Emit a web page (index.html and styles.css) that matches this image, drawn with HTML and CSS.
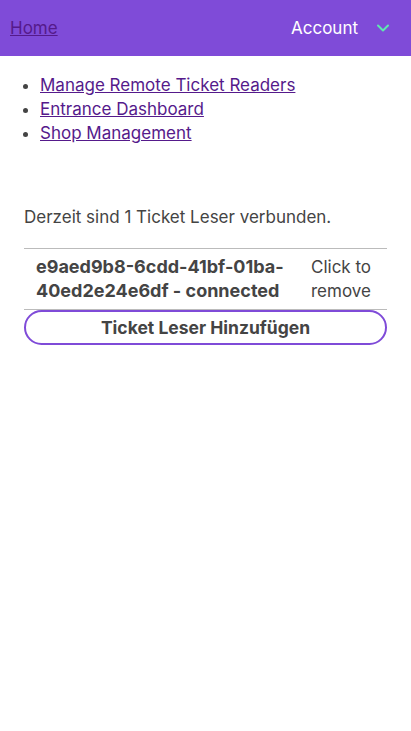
FILE: index.html
```html
<!DOCTYPE html>
<html lang="de">
<head>
<meta charset="utf-8">
<link rel="stylesheet" href="styles.css">
</head>
<body>
<header class="topbar">
  <a class="home" href="#">Home</a>
  <div class="account">
    <span>Account</span>
    <svg class="chev" width="14" height="10" viewBox="0 0 14 10"><path d="M2 2.5 L7 7.5 L12 2.5" fill="none" stroke="#5ee8b0" stroke-width="2" stroke-linecap="round" stroke-linejoin="round"/></svg>
  </div>
</header>
<ul class="nav">
  <li><a href="#">Manage Remote Ticket Readers</a></li>
  <li><a href="#">Entrance Dashboard</a></li>
  <li><a href="#">Shop Management</a></li>
</ul>
<main class="content">
  <p class="status">Derzeit sind 1 Ticket Leser verbunden.</p>
  <table class="readers">
    <tr>
      <td class="id">e9aed9b8-6cdd-41bf-01ba-40ed2e24e6df - connected</td>
      <td class="remove">Click to remove</td>
    </tr>
  </table>
  <button class="add">Ticket Leser Hinzufügen</button>
</main>
</body>
</html>
```
FILE: styles.css
```css
html, body { margin: 0; padding: 0; background: #fff; }
body { font-family: Inter, "Noto Sans", sans-serif; color: #444; }
.topbar {
  height: 56px;
  background: #7f4bd8;
  display: flex;
  align-items: center;
  justify-content: space-between;
  padding: 0 21px 0 10px;
  box-sizing: border-box;
}
.home { color: #551a8b; font-size: 17px; }
.account { display: flex; align-items: center; gap: 18px; color: #fff; font-size: 17px; }
.chev { display: block; }
.nav { margin: 17px 0 0; padding-left: 40px; font-size: 17px; line-height: 24px; color: #444; }
.nav a { color: #551a8b; }
.content { padding: 0 24px; margin-top: 60px; }
.status { margin: 0 0 19px; font-size: 17px; line-height: 24px; }
.readers { width: 100%; border-collapse: collapse; border-top: 1px solid #bbb; border-bottom: 1px solid #bbb; font-size: 17px; line-height: 24px; }
.readers td { padding: 6px 12px; vertical-align: top; }
.id { font-weight: 700; color: #444; font-size: 18px; padding-right: 4px !important; }
.remove { color: #444; width: 64px; padding-left: 14px !important; padding-right: 12px !important; }
.add {
  display: block;
  width: 100%;
  height: 35px;
  margin-top: 0;
  border: 2px solid #7f4bd8;
  border-radius: 18px;
  background: #fff;
  font-family: Inter, sans-serif;
  font-size: 17.5px;
  font-weight: 700;
  color: #444;
}
```
